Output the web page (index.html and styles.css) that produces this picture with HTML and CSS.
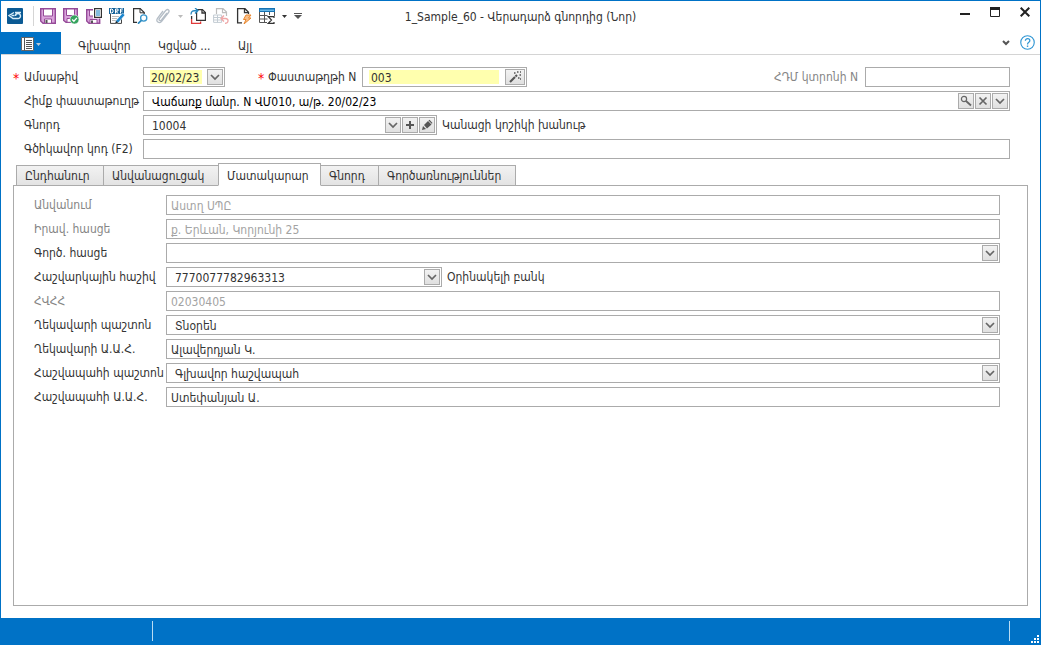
FILE: index.html
```
<!DOCTYPE html>
<html lang="hy">
<head>
<meta charset="utf-8">
<title>1_Sample_60 - Վերադարձ գնորդից (Նոր)</title>
<link rel="stylesheet" href="styles.css">
</head>
<body>
<svg class="defs" aria-hidden="true">
  <symbol id="chev" viewBox="0 0 14 14"><path d="M3 5l4 4 4-4" fill="none" stroke="#666" stroke-width="1.7"/></symbol>
  <symbol id="caret" viewBox="0 0 5 3"><path d="M0 0h5L2.500 3z" fill="currentColor"/></symbol>
</svg>
<div class="window">
  <header class="titlebar">
    <div class="quick">
      <svg class="logo" viewBox="0 0 16 16"><rect width="16" height="16" rx="1" fill="#0b5a94"/><path d="M7 4.500L2 7.500l4 3h5a2.500 2.500 0 1 0-2.500-2.500M4.500 7.500h3M8 4.500h6" fill="none" stroke="#d9edf8" stroke-width="1.400"/></svg>
      <span class="sep"></span>
      <button class="tool" aria-label="Պահպանել"><svg viewBox="0 0 16 16"><path d="M.7.7h14.600v14.600H3L.7 13z" fill="#d9a3db" stroke="#954a98" stroke-width="1.400"/><path d="M3.500 1h9v7h-9z" fill="#fff" stroke="#954a98"/><path d="M4.500 11h7v4.300h-7z" fill="#fff" stroke="#954a98"/><path d="M5.500 12h2v3h-2z" fill="#555"/></svg></button>
      <button class="tool" aria-label="Պահպանել և փակել"><svg viewBox="0 0 16 16"><path d="M.7.7h13.600v13.600H3L.7 12.500z" fill="#d9a3db" stroke="#954a98" stroke-width="1.400"/><path d="M3.500 1h8v6.500h-8zM4 10.500h5v3.800H4z" fill="#fff" stroke="#954a98"/><circle cx="11.500" cy="11.500" r="4.500" fill="#35a35e" stroke="#fff" stroke-width=".6"/><path d="M9.200 11.500l1.700 1.800 3-3.400" fill="none" stroke="#fff" stroke-width="1.300"/></svg></button>
      <button class="tool" aria-label="Պահպանել որպես"><svg viewBox="0 0 16 16"><path d="M.7 1.700h13v13.600H3L.7 13z" fill="#d9a3db" stroke="#954a98" stroke-width="1.400"/><path d="M3.500 2h5v6h-5zM4 11.500h7v3.800H4z" fill="#fff" stroke="#954a98"/><path d="M5 12.500h2V15H5z" fill="#555"/><path d="M7 0h9v10.500H7z" fill="#fff"/><path d="M8.600.6h6.800v8.800H8.600z" fill="#fff" stroke="#333" stroke-width="1.200"/><path d="M10 3h4M10 5h4M10 7h4" stroke="#0878bd"/></svg></button>
      <button class="tool" aria-label="Սևագիր"><svg viewBox="0 0 16 16"><path d="M1.500 6v9.400h11V9" fill="#fff" stroke="#444"/><path d="M3 8.500h7M3 10.500h5M3 12.500h4" stroke="#bbb"/><path d="M0 0h15v6H0z" fill="#17649b"/><path d="M1.500 1v4h1.500l1-1V2l-1-1zM6.500 5.500v-4.500H9v2H6.700L9 5.500M11.500 5.500V1H14M11.500 3h2" fill="none" stroke="#fff"/><path d="M7 12.500L13.500 5 16 7l-6.500 7.500-3 1z" fill="#1c86cd" stroke="#fff" stroke-width=".6"/><path d="M6 16l1-3 2 1.600z" fill="#222"/></svg></button>
      <button class="tool" aria-label="Դիտել"><svg viewBox="0 0 16 16"><path d="M5 14.400H1.600V.6h6.600l4 4V6" fill="none" stroke="#333" stroke-width="1.200"/><path d="M8 .5v4.300h4.300" fill="none" stroke="#333"/><circle cx="11.700" cy="10" r="3.100" fill="#fff" stroke="#3795cb" stroke-width="1.300"/><path d="M9.400 12.300L6 15.700" stroke="#2686bd" stroke-width="1.700"/></svg></button>
      <button class="tool" aria-label="Կցել" disabled><svg viewBox="0 0 16 16"><path d="M12 5l-5.500 7c-1.500 1.500-3.300 0-2-1.700L9.500 4M9.500 4l1.500-1.800c2-1.700 4 .2 2.500 2.300L6.500 13.500c-2.500 2.500-6-.2-4-3.200L8 3" fill="none" stroke="#b4bdc6" stroke-width="1.300"/></svg></button>
      <button class="drop pale" aria-label="Կցելու ընտրանք" disabled><svg viewBox="0 0 5 3"><use href="#caret"/></svg></button>
      <button class="tool" aria-label="Պատճենել"><svg viewBox="0 0 16 16"><path d="M6.600 1.600h5.800l3 3v7.800H6.600z" fill="#fff" stroke="#333" stroke-width="1.200"/><path d="M12 1.500V5h3.500" fill="none" stroke="#333" stroke-width="1.300"/><path d="M1.600 11v4.400h9V13.500" fill="none" stroke="#e03a3a" stroke-width="1.300"/><path d="M1.600 8v3" stroke="#333" stroke-width="1.300"/><path d="M1 6.500C1 3 3 2.500 7 2.500M5 0l3 2.500-3 3" fill="none" stroke="#2686bd" stroke-width="1.300"/></svg></button>
      <button class="tool" aria-label="Հետ" disabled><svg viewBox="0 0 16 16"><path d="M3.500 6V.6H10l3.500 3.500V8M9.500.6v4h4" fill="none" stroke="#bdbdbd" stroke-width="1.200"/><path d="M.6 7h8v7.400h-8zM.6 9.500h8M.6 12h8M4.500 7v7.400" fill="none" stroke="#c3ccd3"/><path d="M8.500 10.500h4c3.500.5 3.500 4.500-.5 5M11 7.500l-3 3 3 3" fill="none" stroke="#efa7a7" stroke-width="1.300"/></svg></button>
      <button class="tool" aria-label="Արագ գործողություն"><svg viewBox="0 0 16 16"><path d="M6 14.900H1.600V.7H9l3.500 3.500V6M8.500.7v4h4" fill="none" stroke="#333" stroke-width="1.300"/><path d="M10 7h5l-2.500 3H15l-7 6 2-4.500H7.500z" fill="#f9c08a" stroke="#e8862e"/></svg></button>
      <button class="tool" aria-label="Ամփոփում"><svg viewBox="0 0 16 16"><path d="M.5.500h15V8M.5.500v14H8M.5 7.500h8M.5 11h8M5.500 3v11.500M10.500 3v4" fill="none" stroke="#555"/><path d="M0 0h16v4H0z" fill="#1673b3"/><path d="M1 1.500h14V3H1z" fill="#69b7e6"/><path d="M15 10V8.600H9.200l3.300 3.400-3.300 3.400H15V14" fill="#fff" stroke="#333" stroke-width="1.200"/></svg></button>
      <button class="drop" aria-label="Ամփոփման ընտրանք"><svg viewBox="0 0 5 3"><use href="#caret"/></svg></button>
      <button class="more" aria-label="Հարմարեցնել"><svg viewBox="0 0 8 6"><path d="M0 0h8v1H0zM0 2h8L4 6z" fill="#555"/></svg></button>
    </div>
    <h1 class="title">1_Sample_60 - Վերադարձ գնորդից (Նոր)</h1>
    <div class="winbtns">
      <button aria-label="Ծալել"><svg viewBox="0 0 10 10"><path d="M0 6h10v2H0z" fill="#222"/></svg></button>
      <button aria-label="Մեծացնել"><svg viewBox="0 0 10 10"><path d="M.5.500h9v9h-9z" fill="none" stroke="#222"/><path d="M0 0h10v3H0z" fill="#222"/></svg></button>
      <button aria-label="Փակել"><svg viewBox="0 0 10 10"><path d="M.7.7l8.600 8.600M9.300.7L.7 9.300" stroke="#222" stroke-width="2"/></svg></button>
    </div>
  </header>

  <nav class="ribbon">
    <button class="menu" aria-label="Ընտրացանկ">
      <svg class="menu-icon" viewBox="0 0 13 14"><path d="M.5.500h12v13H.5z" fill="#fff" stroke="#666"/><path d="M3.500 .5v13M5 3.500h6M5 5.500h6M5 7.500h6M5 9.500h6M5 11.500h6" stroke="#555"/></svg>
      <svg class="menu-caret" viewBox="0 0 5 3"><use href="#caret"/></svg>
    </button>
    <button class="rtab">Գլխավոր</button>
    <button class="rtab">Կցված ...</button>
    <button class="rtab">Այլ</button>
    <button class="fold" aria-label="Թաքցնել"><svg viewBox="0 0 8 6"><path d="M1 1l3 3 3-3" fill="none" stroke="#555" stroke-width="2"/></svg></button>
    <button class="help" aria-label="Օգնություն"><svg viewBox="0 0 16 16"><circle cx="8" cy="8" r="7.200" fill="none" stroke="#2e95d3" stroke-width="1.200"/><path d="M5.700 6.200c0-3.200 4.800-3 4.800-.2C10.500 7.700 8 7.800 8 10" fill="none" stroke="#2e95d3" stroke-width="1.300"/><path d="M7.300 11.200h1.500v1.500H7.300z" fill="#2e95d3"/></svg></button>
  </nav>

  <main class="content">
    <form class="head">
      <div class="row">
        <label class="lbl req" for="date">Ամսաթիվ</label>
        <div class="field w-date"><input id="date" class="yellow" value="20/02/23"><button type="button" class="btn" aria-label="Օրացույց"><svg viewBox="0 0 14 14"><use href="#chev"/></svg></button></div>
        <label class="lbl-num req" for="num">Փաստաթղթի N</label>
        <div class="field w-num"><input id="num" class="yellow" value="003"><button type="button" class="btn wide" aria-label="Լրացնել"><svg viewBox="0 0 14 14"><path d="M2 12l5-5" stroke="#555" stroke-width="2.200"/><path d="M7.500 6.500L9 5" stroke="#555" stroke-width="2.200"/><path d="M6 3h1.500M9 2h1.500M12 2h1M11.500 5H13M10 8h1.500M12 9h1" stroke="#555" stroke-width="1.500"/></svg></button></div>
        <label class="lbl-ecr dim" for="ecr">ՀԴՄ կտրոնի N</label>
        <div class="field w-ecr"><input id="ecr"></div>
      </div>
      <div class="row">
        <label class="lbl" for="base">Հիմք փաստաթուղթ</label>
        <div class="field grow"><input id="base" class="indent black" value="Վաճառք մանր. N ՎՄ010, ա/թ. 20/02/23">
          <button type="button" class="btn" aria-label="Գտնել"><svg viewBox="0 0 14 14"><circle cx="5" cy="5" r="2.600" fill="none" stroke="#666" stroke-width="1.200"/><path d="M7 7l5 4.500" stroke="#666" stroke-width="1.800"/></svg></button>
          <button type="button" class="btn" aria-label="Ջնջել"><svg viewBox="0 0 14 14"><path d="M3.500 3.500l7 7M10.500 3.500l-7 7" stroke="#666" stroke-width="1.700"/></svg></button>
          <button type="button" class="btn" aria-label="Ընտրել"><svg viewBox="0 0 14 14"><use href="#chev"/></svg></button>
        </div>
      </div>
      <div class="row">
        <label class="lbl" for="buyer">Գնորդ</label>
        <div class="field w-buyer"><select id="buyer" class="indent"><option>10004</option></select>
          <span class="btn" aria-hidden="true"><svg viewBox="0 0 14 14"><use href="#chev"/></svg></span>
          <button type="button" class="btn" aria-label="Ավելացնել"><svg viewBox="0 0 14 14"><path d="M7 3v8M3 7h8" stroke="#555" stroke-width="2"/></svg></button>
          <button type="button" class="btn" aria-label="Խմբագրել"><svg viewBox="0 0 14 14"><path d="M2 12l1-4 3 3zM4 7l4-4 3.500 3.500-4.500 4z" fill="#555"/><path d="M8.500 2.500l1-.8L12.500 5l-.8.700z" fill="#555"/></svg></button>
        </div>
        <span class="note">Կանացի կոշիկի խանութ</span>
      </div>
      <div class="row">
        <label class="lbl" for="code">Գծիկավոր կոդ (F2)</label>
        <div class="field grow"><input id="code"></div>
      </div>
    </form>

    <div class="tabs" role="tablist">
      <button class="tab t1" role="tab">Ընդհանուր</button>
      <button class="tab t2" role="tab">Անվանացուցակ</button>
      <button class="tab t3 active" role="tab" aria-selected="true">Մատակարար</button>
      <button class="tab t4" role="tab">Գնորդ</button>
      <button class="tab t5" role="tab">Գործառնություններ</button>
    </div>
    <section class="panel" role="tabpanel">
      <div class="row"><label class="plbl dim" for="p1">Անվանում</label><div class="field grow"><input id="p1" value="Աստղ ՍՊԸ" disabled></div></div>
      <div class="row"><label class="plbl dim" for="p2">Իրավ. հասցե</label><div class="field grow"><input id="p2" value="ք. Երևան, Կորյունի 25" disabled></div></div>
      <div class="row"><label class="plbl" for="p3">Գործ. հասցե</label><div class="field grow"><select id="p3" class="indent"><option></option></select><span class="btn" aria-hidden="true"><svg viewBox="0 0 14 14"><use href="#chev"/></svg></span></div></div>
      <div class="row"><label class="plbl" for="p4">Հաշվարկային հաշիվ</label><div class="field w-acc"><select id="p4" class="indent"><option>7770077782963313</option></select><span class="btn" aria-hidden="true"><svg viewBox="0 0 14 14"><use href="#chev"/></svg></span></div><span class="note">Օրինակելի բանկ</span></div>
      <div class="row"><label class="plbl dim" for="p5">ՀՎՀՀ</label><div class="field grow"><input id="p5" value="02030405" disabled></div></div>
      <div class="row"><label class="plbl" for="p6">Ղեկավարի պաշտոն</label><div class="field grow"><select id="p6" class="indent"><option>Տնօրեն</option></select><span class="btn" aria-hidden="true"><svg viewBox="0 0 14 14"><use href="#chev"/></svg></span></div></div>
      <div class="row"><label class="plbl" for="p7">Ղեկավարի Ա.Ա.Հ.</label><div class="field grow"><input id="p7" value="Ալավերդյան Կ."></div></div>
      <div class="row"><label class="plbl" for="p8">Հաշվապահի պաշտոն</label><div class="field grow"><select id="p8" class="indent"><option>Գլխավոր հաշվապահ</option></select><span class="btn" aria-hidden="true"><svg viewBox="0 0 14 14"><use href="#chev"/></svg></span></div></div>
      <div class="row"><label class="plbl" for="p9">Հաշվապահի Ա.Ա.Հ.</label><div class="field grow"><input id="p9" value="Ստեփանյան Ա."></div></div>
    </section>
  </main>

  <footer class="status">
    <span class="cell first"></span><span class="cell"></span>
    <svg class="grip" viewBox="0 0 8 8"><path d="M6 0h2v2H6zM3 3h2v2H3zM6 3h2v2H6zM0 6h2v2H0zM3 6h2v2H3zM6 6h2v2H6z" fill="#fff"/></svg>
  </footer>
</div>
</body>
</html>
```
FILE: styles.css
```
* { box-sizing: border-box; }
body { margin: 0; background: #fff; }
body, button, input, select {
  font-family: "DejaVu Sans Condensed", "DejaVu Sans", "Noto Sans", sans-serif;
  font-size: 12px;
  color: #333;
}
button { padding: 0; border: 0; background: none; }
svg { display: block; }
.defs { position: absolute; width: 0; height: 0; }

.window {
  display: flex;
  flex-direction: column;
  min-height: 100vh;
  margin-right: 1px;
  border: 1px solid #0072c6;
  border-bottom: 0;
}

.titlebar {
  display: grid;
  grid-template-columns: 1fr auto 1fr;
  height: 31px;
}
.quick { display: flex; align-items: center; gap: 7px; height: 30px; padding-left: 6px; }
.logo, .tool, .tool svg { width: 16px; height: 16px; }
.sep { width: 1px; height: 20px; margin: 0 -1px 0 3px; background: #d5d5d5; }
.drop, .drop svg { width: 5px; height: 3px; }
.drop { color: #333; }
.pale { color: #bbb; }
.more, .more svg { width: 8px; height: 6px; }
.title { margin: 0; font-size: 12px; font-weight: 400; line-height: 32px; }
.winbtns { display: flex; justify-content: flex-end; gap: 20px; padding: 6px 10px 0 0; }
.winbtns button, .winbtns svg { width: 10px; height: 10px; }

.ribbon {
  display: flex;
  align-items: center;
  height: 23px;
  border-bottom: 1px solid #d4d4d4;
}
.menu {
  display: flex;
  align-items: center;
  gap: 2px;
  width: 60px;
  height: 22px;
  padding: 2px 0 0 20px;
  background: #0072c6;
  color: #b9c9d8;
}
.menu-icon { width: 13px; height: 14px; }
.menu-caret { width: 5px; height: 3px; }
.rtab { width: 80px; padding: 6px 0 0 17px; line-height: 18px; text-align: left; white-space: nowrap; }
.fold { margin-left: auto; }
.fold, .fold svg { width: 8px; height: 6px; }
.help { margin: 0 5px 2px 10px; }
.help, .help svg { width: 15px; height: 15px; }

.content { flex: 1; display: flex; flex-direction: column; padding: 12px; }
.head { display: flex; flex-direction: column; gap: 4px; padding-right: 18px; }
.row { display: flex; align-items: center; height: 20px; white-space: nowrap; }
.lbl { width: 130px; padding-left: 11px; }
.req { position: relative; }
.req::before { content: "*"; position: absolute; left: 0; color: #f00; font-size: 14px; }
.lbl-num { margin-left: 33px; padding-left: 10px; width: 104px; }
.lbl-ecr { margin-left: auto; margin-right: 7px; }
.dim { color: #858585; }
.note { margin-left: 5px; }

.field {
  display: flex;
  gap: 1px;
  height: 20px;
  padding: 1px;
  border: 1px solid #ababab;
  background: #fff;
}
.grow { flex: 1; }
.w-date { width: 82px; }
.w-num { width: 165px; }
.w-ecr { width: 145px; }
.w-buyer { width: 294px; }
.w-acc { width: 276px; }
.field input, .field select {
  flex: 1;
  min-width: 0;
  width: 0;
  padding: 1px 3px 0;
  border: 0;
  outline: 0;
  appearance: none;
  background: transparent;
}
.field .indent { padding-left: 7px; }
.field .black { color: #000; }
.field .yellow { height: 14px; margin: 1px 5px 0; padding: 1px 2px 0; background: #ffffae; }
.w-date .yellow { margin-right: 4px; padding: 1px 0 0 1px; }
.field input:disabled { color: #a3a3a3; }
.btn {
  flex: none;
  width: 16px;
  height: 16px;
  border: 1px solid #ababab;
  background: linear-gradient(#f2f2f2, #e0e0e0);
}
.btn svg { width: 14px; height: 14px; margin: 0 auto; }
.wide { width: 20px; }

.tabs { display: flex; align-items: flex-end; height: 23px; margin: 4px 0 -1px 3px; }
.tab {
  height: 21px;
  margin-right: -1px;
  padding: 0 8px;
  border: 1px solid #ababab;
  background: linear-gradient(#f2f2f2, #e3e3e3);
  text-align: left;
  white-space: nowrap;
}
.tab.active { z-index: 1; height: 23px; padding-top: 2px; border-bottom-color: #fff; background: #fff; }
.t1 { width: 88px; }
.t2 { width: 116px; }
.t3 { width: 103px; }
.t4 { width: 59px; }
.t5 { width: 138px; }

.panel {
  flex: 1;
  display: flex;
  flex-direction: column;
  gap: 4px;
  padding: 9px 27px 9px 20px;
  border: 1px solid #ababab;
}
.plbl { width: 132px; }

.status {
  display: flex;
  height: 27px;
  padding: 3px 1px 4px 0;
  background: #0072c6;
}
.cell { flex: 1; border-right: 1px solid #b9dcf3; }
.cell.first { flex: none; width: 152px; }
.grip { width: 8px; height: 8px; margin: 14px 0 0 21px; }
```
